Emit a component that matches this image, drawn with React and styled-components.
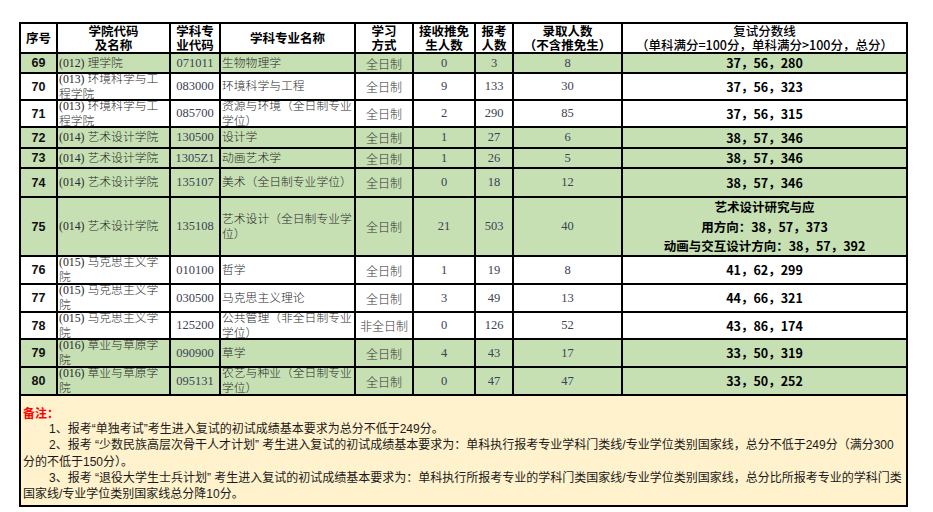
import React from "react";
import styled, { createGlobalStyle } from "styled-components";

const GlobalStyle = createGlobalStyle`
  html, body {
    margin: 0;
    padding: 0;
    background: #ffffff;
  }
  body {
    font-family: "Liberation Serif", "Noto Sans CJK SC", serif;
  }
`;

const GREEN = "#c6e0b4";

const rows = [
  { no: 69, dept: "012", college: "理学院", code: "071011", major: "生物物理学", mode: "全日制", tm: 0, apply: 3, admit: 8, score: ["37，56，280"], green: true, h: 20 },
  { no: 70, dept: "013", college: "环境科学与工程学院", code: "083000", major: "环境科学与工程", mode: "全日制", tm: 9, apply: 133, admit: 30, score: ["37，56，323"], h: 27 },
  { no: 71, dept: "013", college: "环境科学与工程学院", code: "085700", major: "资源与环境（全日制专业学位）", mode: "全日制", tm: 2, apply: 290, admit: 85, score: ["37，56，315"], h: 27 },
  { no: 72, dept: "014", college: "艺术设计学院", code: "130500", major: "设计学", mode: "全日制", tm: 1, apply: 27, admit: 6, score: ["38，57，346"], green: true, h: 21 },
  { no: 73, dept: "014", college: "艺术设计学院", code: "1305Z1", major: "动画艺术学", mode: "全日制", tm: 1, apply: 26, admit: 5, score: ["38，57，346"], green: true, h: 20 },
  { no: 74, dept: "014", college: "艺术设计学院", code: "135107", major: "美术（全日制专业学位）", mode: "全日制", tm: 0, apply: 18, admit: 12, score: ["38，57，346"], green: true, h: 29 },
  { no: 75, dept: "014", college: "艺术设计学院", code: "135108", major: "艺术设计（全日制专业学位）", mode: "全日制", tm: 21, apply: 503, admit: 40, score: ["艺术设计研究与应", "用方向：38，57，373", "动画与交互设计方向：38，57，392"], green: true, h: 59 },
  { no: 76, dept: "015", college: "马克思主义学院", code: "010100", major: "哲学", mode: "全日制", tm: 1, apply: 19, admit: 8, score: ["41，62，299"], h: 28 },
  { no: 77, dept: "015", college: "马克思主义学院", code: "030500", major: "马克思主义理论", mode: "全日制", tm: 3, apply: 49, admit: 13, score: ["44，66，321"], h: 28 },
  { no: 78, dept: "015", college: "马克思主义学院", code: "125200", major: "公共管理（非全日制专业学位）", mode: "非全日制", tm: 0, apply: 126, admit: 52, score: ["43，86，174"], h: 27 },
  { no: 79, dept: "016", college: "草业与草原学院", code: "090900", major: "草学", mode: "全日制", tm: 4, apply: 43, admit: 17, score: ["33，50，319"], green: true, h: 28 },
  { no: 80, dept: "016", college: "草业与草原学院", code: "095131", major: "农艺与种业（全日制专业学位）", mode: "全日制", tm: 0, apply: 47, admit: 47, score: ["33，50，252"], green: true, h: 28 },
];

const cols = [37, 113, 50, 135, 58, 62, 38, 109, 285];

export default function App() {
  return (
    <Page>
      <GlobalStyle />
      <Sheet>
        <colgroup>
          {cols.map((w, i) => (
            <col key={i} style={{ width: w }} />
          ))}
        </colgroup>
        <thead>
          <tr>
            <Th><Clip $h={28}>序号</Clip></Th>
            <Th><Clip $h={28}>学院代码<br />及名称</Clip></Th>
            <Th><Clip $h={28}>学科专<br />业代码</Clip></Th>
            <Th><Clip $h={28}>学科专业名称</Clip></Th>
            <Th><Clip $h={28}>学习<br />方式</Clip></Th>
            <Th><Clip $h={28}>接收推免<br />生人数</Clip></Th>
            <Th><Clip $h={28}>报考<br />人数</Clip></Th>
            <Th><Clip $h={28}>录取人数<br />（不含推免生）</Clip></Th>
            <Th $light><Clip $h={28}>复试分数线<br />（单科满分=100分，单科满分&gt;100分，总分）</Clip></Th>
          </tr>
        </thead>
        <tbody>
          {rows.map((r) => (
            <Row key={r.no} $green={r.green}>
              <Td><Clip $h={r.h - 2}><SeqNo>{r.no}</SeqNo></Clip></Td>
              <Td><Clip $h={r.h - 2} $align="left"><Name>{`(${r.dept})\u00a0${r.college}`}</Name></Clip></Td>
              <Td><Clip $h={r.h - 2}><Num>{r.code}</Num></Clip></Td>
              <Td><Clip $h={r.h - 2} $align="left"><Name>{r.major}</Name></Clip></Td>
              <Td><Clip $h={r.h - 2}><Mode>{r.mode}</Mode></Clip></Td>
              <Td><Clip $h={r.h - 2}><Num>{r.tm}</Num></Clip></Td>
              <Td><Clip $h={r.h - 2}><Num>{r.apply}</Num></Clip></Td>
              <Td><Clip $h={r.h - 2}><Num>{r.admit}</Num></Clip></Td>
              <Td>
                <Clip $h={r.h - 2}>
                  <Score>
                    {r.score.map((s, i) => (
                      <div key={i}>{s}</div>
                    ))}
                  </Score>
                </Clip>
              </Td>
            </Row>
          ))}
          <tr>
            <NotesCell colSpan={9}>
              <Notes>
                <NoteTitle>备注：</NoteTitle>
                <NoteLine $indent>1、报考“单独考试”考生进入复试的初试成绩基本要求为总分不低于249分。</NoteLine>
                <NoteLine $indent>2、报考 “少数民族高层次骨干人才计划” 考生进入复试的初试成绩基本要求为：单科执行报考专业学科门类线/专业学位类别国家线，总分不低于249分（满分300</NoteLine>
                <NoteLine>分的不低于150分）。</NoteLine>
                <NoteLine $indent>3、报考 “退役大学生士兵计划” 考生进入复试的初试成绩基本要求为：单科执行所报考专业的学科门类国家线/专业学位类别国家线，总分比所报考专业的学科门类</NoteLine>
                <NoteLine>国家线/专业学位类别国家线总分降10分。</NoteLine>
              </Notes>
            </NotesCell>
          </tr>
        </tbody>
      </Sheet>
    </Page>
  );
}

const Page = styled.div`
  padding: 22px 0 0 19px;
`;

const Sheet = styled.table`
  border-collapse: collapse;
  table-layout: fixed;
  width: 887px;
  td, th {
    border: 2px solid #000;
    padding: 0;
  }
`;

const Th = styled.th`
  font-family: "Noto Sans CJK SC", sans-serif;
  font-size: 12.5px;
  font-weight: ${(p) => (p.$light ? 500 : 700)};
  color: #000;
  line-height: 14px;
  text-align: center;
`;

const Row = styled.tr`
  background: ${(p) => (p.$green ? GREEN : "#ffffff")};
`;

const Td = styled.td`
  vertical-align: middle;
`;

const Clip = styled.div`
  height: ${(p) => p.$h}px;
  overflow: hidden;
  display: flex;
  align-items: center;
  justify-content: ${(p) => (p.$align === "left" ? "flex-start" : "center")};
  text-align: ${(p) => p.$align || "center"};
  padding: 0 1px;
`;

const SeqNo = styled.span`
  font-family: "Liberation Sans", sans-serif;
  font-weight: 700;
  font-size: 12.5px;
  color: #111;
`;

const Name = styled.span`
  font-family: "Liberation Serif", "Noto Sans CJK SC", serif;
  font-size: 11.8px;
  line-height: 15px;
  color: #2a2a2a;
  font-weight: 300;
`;

const Num = styled.span`
  font-family: "Liberation Serif", serif;
  font-size: 12.5px;
  color: #3c4154;
`;

const Mode = styled.span`
  font-family: "Noto Sans CJK SC", sans-serif;
  font-size: 12px;
  font-weight: 300;
  color: #333;
`;

const Score = styled.div`
  font-family: "Noto Sans CJK SC", sans-serif;
  font-size: 12.5px;
  font-weight: 700;
  line-height: 19.5px;
  color: #000;
`;

const NotesCell = styled.td`
  background: #fff2cc;
  vertical-align: top;
`;

const Notes = styled.div`
  height: 109px;
  padding: 9px 0 0 2px;
  box-sizing: border-box;
  font-family: "Liberation Sans", "Noto Sans CJK SC", sans-serif;
  font-size: 12px;
  line-height: 16.2px;
  color: #1a1a1a;
`;

const NoteTitle = styled.div`
  color: #ff0000;
  font-weight: 700;
  font-family: "Noto Sans CJK SC", sans-serif;
`;

const NoteLine = styled.div`
  white-space: nowrap;
  padding-left: ${(p) => (p.$indent ? "26px" : "0")};
`;
